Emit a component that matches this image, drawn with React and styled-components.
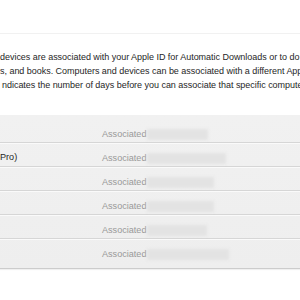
import React from "react";
import styled, { createGlobalStyle } from "styled-components";

const GlobalStyle = createGlobalStyle`
  html, body {
    margin: 0;
    padding: 0;
    background: #ffffff;
    overflow: hidden;
  }
  body {
    font-family: "Liberation Sans", Arial, Helvetica, sans-serif;
  }
`;

const INTRO = [
  "devices are associated with your Apple ID for Automatic Downloads or to do",
  "s, and books. Computers and devices can be associated with a different App",
  "ndicates the number of days before you can associate that specific compute",
];

const DEVICES = [
  { name: "", blur: 61 },
  { name: "Pro)", blur: 79 },
  { name: "", blur: 67 },
  { name: "", blur: 67 },
  { name: "", blur: 60 },
  { name: "", blur: 82 },
];

const App = () => {
  return (
    <Page>
      <GlobalStyle />
      <TopBar />
      <Intro>
        {INTRO.map((line, i) => (
          <IntroLine key={i} indent={i === 2 ? 2 : 0}>
            {line}
          </IntroLine>
        ))}
      </Intro>
      <Table>
        {DEVICES.map((d, i) => (
          <Row key={i} last={i === DEVICES.length - 1}>
            <Name>{d.name}</Name>
            <Status>
              Associated
              <Redacted style={{ width: d.blur }} />
            </Status>
          </Row>
        ))}
      </Table>
    </Page>
  );
};

export default App;

const Page = styled.div`
  width: 300px;
  height: 300px;
  background: #ffffff;
  overflow: hidden;
`;

const TopBar = styled.div`
  height: 33px;
  border-bottom: 1px solid #f1f1f1;
`;

const Intro = styled.div`
  margin-top: 16px;
  font-size: 9px;
  letter-spacing: -0.03px;
  line-height: 14px;
  color: #262626;
`;

const IntroLine = styled.div`
  white-space: nowrap;
  padding-left: ${({ indent }) => indent}px;
`;

const Table = styled.div`
  margin-top: 23px;
  padding: 4px 0 6px;
  background: linear-gradient(#f1f1f1, #eeeeee);
  border-bottom: 1px solid #cccccc;
  box-shadow: 0 1px 1px rgba(0, 0, 0, 0.06);
`;

const Row = styled.div`
  display: grid;
  grid-template-columns: 102px 1fr;
  height: ${({ last }) => (last ? "23px" : "24px")};
  padding-top: 7px;
  box-sizing: border-box;
  font-size: 9.1px;
  line-height: 14px;
  border-bottom: ${({ last }) => (last ? "none" : "1px solid #d6d6d6")};
  box-shadow: ${({ last }) => (last ? "none" : "0 1px 0 #fafafa")};
`;

const Name = styled.div`
  color: #262626;
  white-space: nowrap;
`;

const Status = styled.div`
  display: flex;
  align-items: center;
  color: #999999;
  white-space: nowrap;
`;

const Redacted = styled.span`
  display: inline-block;
  height: 11px;
  margin-left: 1px;
  background: #e3e3e3;
  filter: blur(1.5px);
`;
